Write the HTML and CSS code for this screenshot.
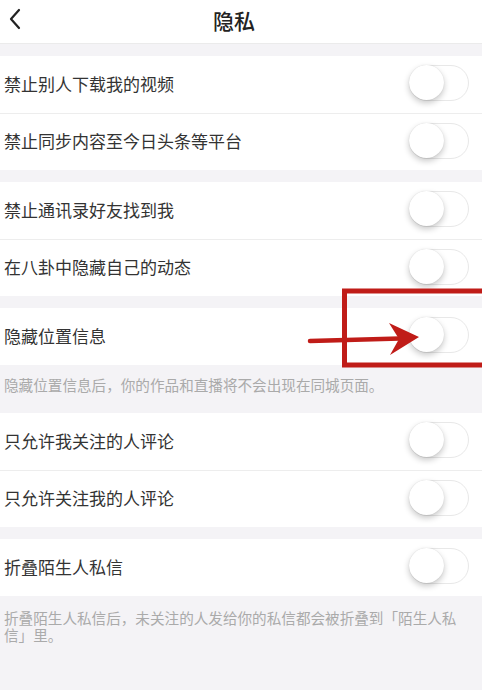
FILE: index.html
```html
<!DOCTYPE html>
<html lang="zh-CN">
<head>
    <meta charset="UTF-8">
    <meta name="viewport" content="width=device-width, initial-scale=1.0">
    <title>隐私</title>
    <link rel="stylesheet" href="styles.css">
</head>
<body>
    <div class="header">
        <svg class="back" width="14" height="22" viewBox="0 0 14 22">
            <path d="M11 2 L3 11 L11 20" fill="none" stroke="#222" stroke-width="2.2" stroke-linecap="round" stroke-linejoin="round"/>
        </svg>
        <h1 class="title">隐私</h1>
    </div>

    <div class="group">
        <div class="row"><span>禁止别人下载我的视频</span><span class="switch"></span></div>
        <div class="row"><span>禁止同步内容至今日头条等平台</span><span class="switch"></span></div>
    </div>

    <div class="group">
        <div class="row"><span>禁止通讯录好友找到我</span><span class="switch"></span></div>
        <div class="row"><span>在八卦中隐藏自己的动态</span><span class="switch"></span></div>
    </div>

    <div class="group">
        <div class="row"><span>隐藏位置信息</span><span class="switch"></span></div>
    </div>
    <p class="note note-short">隐藏位置信息后，你的作品和直播将不会出现在同城页面。</p>

    <div class="group group-flush">
        <div class="row"><span>只允许我关注的人评论</span><span class="switch"></span></div>
        <div class="row"><span>只允许关注我的人评论</span><span class="switch"></span></div>
    </div>

    <div class="group">
        <div class="row"><span>折叠陌生人私信</span><span class="switch"></span></div>
    </div>
    <p class="note note-long">折叠陌生人私信后，未关注的人发给你的私信都会被折叠到「陌生人私信」里。</p>

    <!-- red markup drawn over the screenshot -->
    <svg class="markup" width="482" height="690" viewBox="0 0 482 690">
        <rect x="344.5" y="291" width="160" height="74" fill="none" stroke="#c01c18" stroke-width="5"/>
        <line x1="310" y1="341" x2="400" y2="338.5" stroke="#c01c18" stroke-width="4.5" stroke-linecap="round"/>
        <polygon points="389,323 419,337 390,355 399,339" fill="#c01c18"/>
    </svg>
</body>
</html>
```

FILE: styles.css
```css
* {
    margin: 0;
    padding: 0;
    box-sizing: border-box;
}

body {
    background: #f4f3f6;
    font-family: "Noto Sans CJK SC", "Noto Sans", sans-serif;
    color: #333;
    width: 482px;
    min-height: 690px;
    position: relative;
    overflow: hidden;
}

.header {
    height: 44px;
    background: #fff;
    border-bottom: 1px solid #ebebeb;
    display: flex;
    align-items: center;
    justify-content: center;
    position: relative;
}

.back {
    position: absolute;
    left: 8px;
    top: 8px;
}

.title {
    font-size: 21px;
    font-weight: 500;
    color: #222;
    margin: -4px 14px 0 0;
}

.group {
    background: #fff;
    margin-top: 12px;
}

.group-flush {
    margin-top: 0;
}

.row {
    height: 57px;
    display: flex;
    align-items: center;
    justify-content: space-between;
    padding: 0 13px 3px 4px;
    font-size: 17px;
}

.row + .row {
    border-top: 1px solid #ededed;
}

.switch {
    width: 60px;
    height: 36px;
    border-radius: 18px;
    border: 1.5px solid #e8e8e8;
    background: #fff;
    position: relative;
}

.switch::before {
    content: '';
    position: absolute;
    left: -1px;
    top: -1px;
    width: 35px;
    height: 35px;
    border-radius: 50%;
    background: #fff;
    box-shadow: 0 3px 6px rgba(0, 0, 0, 0.22), 0 0 1px rgba(0, 0, 0, 0.15);
}

.note {
    color: #aaa;
    font-size: 14.6px;
    padding: 0 6px 0 4px;
}

.note-short {
    line-height: 18px;
    padding-top: 11px;
    padding-bottom: 19px;
}

.note-long {
    line-height: 17px;
    padding-top: 13px;
}

.markup {
    position: absolute;
    left: 0;
    top: 0;
    pointer-events: none;
}
```
